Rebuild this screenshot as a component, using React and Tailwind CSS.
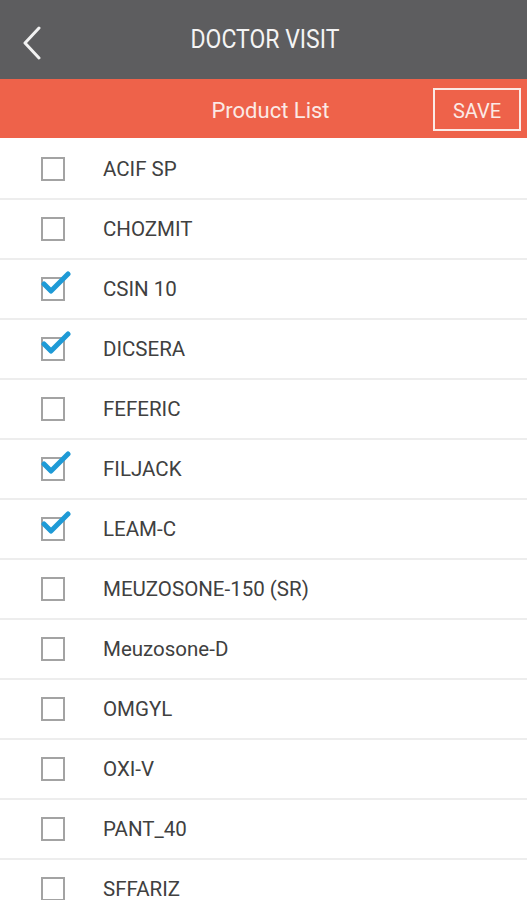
import React, { useState } from 'react';

const PRODUCTS = [
  { name: 'ACIF SP', checked: false },
  { name: 'CHOZMIT', checked: false },
  { name: 'CSIN 10', checked: true },
  { name: 'DICSERA', checked: true },
  { name: 'FEFERIC', checked: false },
  { name: 'FILJACK', checked: true },
  { name: 'LEAM-C', checked: true },
  { name: 'MEUZOSONE-150 (SR)', checked: false },
  { name: 'Meuzosone-D', checked: false },
  { name: 'OMGYL', checked: false },
  { name: 'OXI-V', checked: false },
  { name: 'PANT_40', checked: false },
  { name: 'SFFARIZ', checked: false },
];

const CheckBox = ({ checked }) => (
  <div className="relative h-[24px] w-[24px] border-2 border-[#a3a3a3] bg-white">
    {checked && (
      <svg
        className="absolute left-[-2px] top-[-9px]"
        width="30"
        height="28"
        viewBox="0 0 30 28"
        fill="none"
      >
        <path
          d="M3 14 L10 21 L27 4"
          stroke="#1e9ad6"
          strokeWidth="5"
          strokeLinecap="round"
          strokeLinejoin="round"
        />
      </svg>
    )}
  </div>
);

export default function App() {
  const [items, setItems] = useState(PRODUCTS);

  const toggle = (idx) => {
    setItems((prev) => prev.map((p, i) => (i === idx ? { ...p, checked: !p.checked } : p)));
  };

  return (
    <div className="h-[900px] w-[527px] overflow-hidden bg-white font-['Roboto',sans-serif]">
      {/* Top bar */}
      <div className="relative flex h-[79px] items-center justify-center bg-[#5d5d5f]">
        <button className="absolute left-[18px] top-[22px] p-1">
          <svg width="20" height="34" viewBox="0 0 20 34" fill="none">
            <path
              d="M17 2 L3 17 L17 32"
              stroke="#f2f2f2"
              strokeWidth="3"
              strokeLinecap="round"
              strokeLinejoin="round"
            />
          </svg>
        </button>
        <h1 className="ml-[2px] text-[25px] text-[#f4f4f4] [transform:scaleX(0.92)]">
          DOCTOR VISIT
        </h1>
      </div>

      {/* Sub bar */}
      <div className="relative flex h-[59px] items-center justify-center bg-[#ee624a] pt-[3px]">
        <span className="ml-[14px] text-[22px] text-[#fbe9e5]">Product List</span>
        <button className="absolute left-[433px] top-[9px] flex h-[43px] w-[88px] items-center justify-center border-2 border-[#fbeae6] pt-[2px] text-[20px] text-[#fbeae6]">
          SAVE
        </button>
      </div>

      {/* List */}
      <ul className="pt-[2px]">
        {items.map((item, idx) => (
          <li
            key={item.name}
            onClick={() => toggle(idx)}
            className="flex h-[60px] items-center border-b-2 border-[#ededed]"
          >
            <div className="ml-[41px]">
              <CheckBox checked={item.checked} />
            </div>
            <span className="ml-[38px] text-[20.5px] text-[#404040]">{item.name}</span>
          </li>
        ))}
      </ul>
    </div>
  );
}
